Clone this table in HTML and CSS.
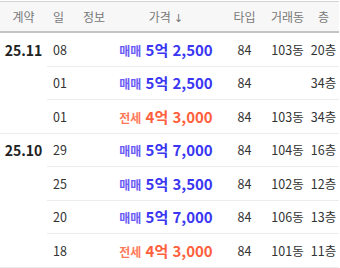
FILE: index.html
```html
<!DOCTYPE html>
<html lang="ko">
<head>
<meta charset="utf-8">
<link rel="stylesheet" href="styles.css">
</head>
<body>
<table class="deals">
  <colgroup>
    <col class="c-ym"><col class="c-d"><col class="c-info"><col class="c-price"><col class="c-type"><col class="c-dong"><col class="c-fl">
  </colgroup>
  <thead>
    <tr>
      <th class="ym">계약</th><th class="left">일</th><th class="left">정보</th><th>가격 <span class="arrow">↓</span></th><th>타입</th><th>거래동</th><th>층</th>
    </tr>
  </thead>
  <tbody>
    <tr class="grp-first">
      <td class="ym">25.11</td><td class="day">08</td><td></td>
      <td class="price sale"><span class="kind">매매</span> 5억 2,500</td>
      <td>84</td><td>103동</td><td>20층</td>
    </tr>
    <tr>
      <td class="ym"></td><td class="day">01</td><td></td>
      <td class="price sale"><span class="kind">매매</span> 5억 2,500</td>
      <td>84</td><td></td><td>34층</td>
    </tr>
    <tr class="grp-last">
      <td class="ym"></td><td class="day">01</td><td></td>
      <td class="price rent"><span class="kind">전세</span> 4억 3,000</td>
      <td>84</td><td>103동</td><td>34층</td>
    </tr>
    <tr class="grp-first">
      <td class="ym">25.10</td><td class="day">29</td><td></td>
      <td class="price sale"><span class="kind">매매</span> 5억 7,000</td>
      <td>84</td><td>104동</td><td>16층</td>
    </tr>
    <tr>
      <td class="ym"></td><td class="day">25</td><td></td>
      <td class="price sale"><span class="kind">매매</span> 5억 3,500</td>
      <td>84</td><td>102동</td><td>12층</td>
    </tr>
    <tr>
      <td class="ym"></td><td class="day">20</td><td></td>
      <td class="price sale"><span class="kind">매매</span> 5억 7,000</td>
      <td>84</td><td>106동</td><td>13층</td>
    </tr>
    <tr>
      <td class="ym"></td><td class="day">18</td><td></td>
      <td class="price rent"><span class="kind">전세</span> 4억 3,000</td>
      <td>84</td><td>101동</td><td>11층</td>
    </tr>
  </tbody>
</table>
</body>
</html>
```
FILE: styles.css
```css
html, body {
  margin: 0;
  padding: 0;
  background: #fff;
}
body {
  font-family: "Noto Sans CJK KR", "Noto Sans", sans-serif;
  color: #333;
}
.deals {
  border-collapse: collapse;
  table-layout: fixed;
  width: 339px;
  margin-top: 1px;
}
.c-ym { width: 47px; }
.c-d { width: 30px; }
.c-info { width: 33px; }
.c-price { width: 112px; }
.c-type { width: 45px; }
.c-dong { width: 41px; }
.c-fl { width: 31px; }

.deals th {
  height: 29px;
  padding: 0;
  font-size: 12px;
  font-weight: 400;
  color: #777;
  background: #f7f7f7;
  border-top: 1px solid #d4d4d4;
  border-bottom: 2px solid #c4c4c4;
  text-align: center;
  white-space: nowrap;
}
.deals th .arrow {
  font-family: "DejaVu Sans", sans-serif;
  font-size: 11px;
  color: #777;
}
.deals th.left {
  text-align: left;
  padding-left: 6px;
}
.deals td {
  height: 32.5px;
  padding: 0;
  font-size: 12.5px;
  text-align: center;
  white-space: nowrap;
  border-bottom: 1px solid #ececec;
}
.deals td.ym {
  border-bottom: none;
  font-size: 14px;
  font-weight: 700;
  color: #222;
}
.deals tr.grp-last td.ym,
.deals tr:last-child td.ym {
  border-bottom: 1px solid #ececec;
}
.deals td.day {
  text-align: left;
  padding-left: 6px;
}
.deals td.price {
  font-size: 15px;
  font-weight: 700;
}
.price .kind {
  font-size: 12px;
}
.price.sale { color: #3a36f2; }
.price.sale .kind { color: #6b5cf6; }
.price.rent { color: #ff5f3d; }
.price.rent .kind { color: #ff7a5c; }
```
